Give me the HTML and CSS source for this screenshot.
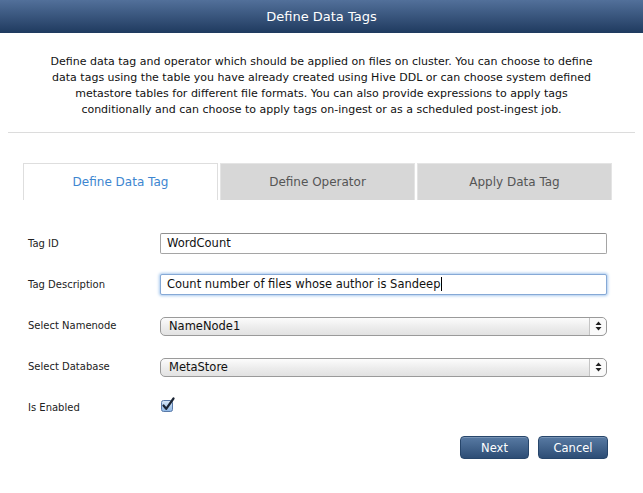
FILE: index.html
```html
<!DOCTYPE html>
<html>
<head>
<meta charset="utf-8">
<link rel="stylesheet" href="styles.css">
</head>
<body>
<div class="header">Define Data Tags</div>
<p class="desc">Define data tag and operator which should be applied on files on cluster. You can choose to define data tags using the table you have already created using Hive DDL or can choose system defined metastore tables for different file formats. You can also provide expressions to apply tags conditionally and can choose to apply tags on-ingest or as a scheduled post-ingest job.</p>
<div class="sep"></div>
<div class="tabs">
  <div class="tab active">Define Data Tag</div>
  <div class="tab">Define Operator</div>
  <div class="tab">Apply Data Tag</div>
</div>
<div class="form">
  <div class="row"><label class="lbl">Tag ID</label><div class="input">WordCount</div></div>
  <div class="row"><label class="lbl">Tag Description</label><div class="input focus">Count number of files whose author is Sandeep<span class="caret"></span></div></div>
  <div class="row"><label class="lbl">Select Namenode</label><div class="select"><span class="val">NameNode1</span><span class="arrows"><svg width="7" height="10" viewBox="0 0 7 10"><path d="M3.5 0.5 L6.5 4 L0.5 4 Z M0.5 6 L6.5 6 L3.5 9.5 Z" fill="#222"/></svg></span></div></div>
  <div class="row"><label class="lbl">Select Database</label><div class="select"><span class="val">MetaStore</span><span class="arrows"><svg width="7" height="10" viewBox="0 0 7 10"><path d="M3.5 0.5 L6.5 4 L0.5 4 Z M0.5 6 L6.5 6 L3.5 9.5 Z" fill="#222"/></svg></span></div></div>
  <div class="row"><label class="lbl">Is Enabled</label><div class="check"><svg width="16" height="16" viewBox="0 0 16 16"><defs><linearGradient id="cg" x1="0" y1="0" x2="0" y2="1"><stop offset="0" stop-color="#d9e8f8"/><stop offset="1" stop-color="#8db6e4"/></linearGradient></defs><rect x="1.5" y="3.5" width="11" height="11" rx="2" fill="url(#cg)" stroke="#5a7aa8"/><path d="M3.5 8.5 L6.2 11.8 L13.5 1.5" fill="none" stroke="#1a2433" stroke-width="2.2" stroke-linecap="round" stroke-linejoin="round"/></svg></div></div>
</div>
<div class="actions">
  <button class="btn next">Next</button>
  <button class="btn cancel">Cancel</button>
</div>
</body>
</html>
```
FILE: styles.css
```css
* { box-sizing: border-box; }
html, body { margin: 0; padding: 0; background: #fff; }
body { width: 643px; height: 493px; font-family: "DejaVu Sans", "Liberation Sans", sans-serif; color: #222; overflow: hidden; }
.header {
  height: 33px;
  line-height: 33px;
  text-align: center;
  color: #fff;
  font-size: 13px;
  background: linear-gradient(#52709a, #1f3a5f);
}
.desc {
  margin: 21px auto 0;
  width: 560px;
  text-align: center;
  font-size: 11px;
  line-height: 16px;
  color: #111;
}
.sep {
  margin: 14px 8px 0;
  height: 1px;
  background: #dcdcdc;
}
.tabs {
  display: flex;
  gap: 2px;
  margin: 30px 31px 0 23px;
  height: 37px;
}
.tab {
  flex: 1;
  display: flex;
  align-items: center;
  justify-content: center;
  font-size: 12px;
  color: #555;
  background: #d7d7d7;
  border: 1px solid #e4e4e4;
  border-bottom: none;
}
.tab.active { background: #fff; color: #3d86d0; border-color: #dedede; }
.form {
  margin-top: 33px;
  padding: 0 36px 0 28px;
  display: flex;
  flex-direction: column;
  gap: 20px;
}
.row {
  display: grid;
  grid-template-columns: 132px 1fr;
  align-items: center;
  height: 21px;
}
.lbl { font-size: 10px; color: #222; }
.input {
  height: 21px;
  border: 1px solid #a5a5a5;
  border-top-color: #8f8f8f;
  border-radius: 2px;
  padding: 0 0 0 6px;
  font-size: 11.5px;
  line-height: 19px;
  color: #111;
  background: #fff;
}
.input.focus { border-color: #86a9d6; box-shadow: 0 0 3px 1px #a9c9ee; }
.caret { display: inline-block; width: 1px; height: 14px; background: #000; vertical-align: -3px; margin-left: 1px; }
.select {
  height: 19px;
  margin-top: 1px;
  border: 1px solid #9a9a9a;
  border-radius: 5px;
  background: linear-gradient(#fcfcfc, #ececec 55%, #e2e2e2);
  display: flex;
  align-items: center;
  font-size: 11.5px;
  color: #111;
}
.select .val { flex: 1; padding-left: 8px; }
.select .arrows {
  width: 17px;
  height: 100%;
  border-left: 1px solid #c4c4c4;
  display: flex;
  align-items: center;
  justify-content: center;
  background: #fafafa;
  border-radius: 0 5px 5px 0;
}
.check { height: 16px; margin-top: -6px; }
.actions {
  display: flex;
  justify-content: flex-end;
  gap: 9px;
  margin: 18px 35px 0 0;
}
.btn {
  height: 23px;
  border: 1px solid #27466b;
  border-radius: 4px;
  background: linear-gradient(#587aa3, #2d4d75);
  color: #fff;
  font-family: "DejaVu Sans", sans-serif;
  font-size: 11.5px;
  padding: 0;
  box-shadow: inset 0 1px 0 rgba(255,255,255,0.2);
}
.btn.next { width: 69px; }
.btn.cancel { width: 70px; }
```
